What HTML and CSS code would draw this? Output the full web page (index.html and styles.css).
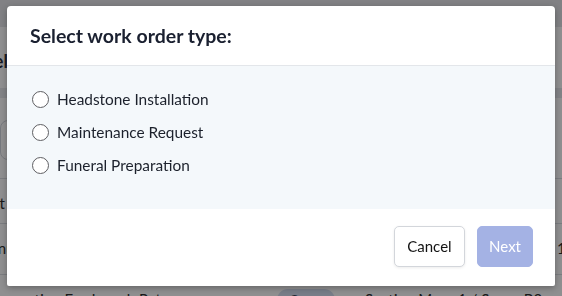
FILE: index.html
```html
<!DOCTYPE html>
<html lang="en">
<head>
  <meta charset="UTF-8" />
  <meta name="viewport" content="width=device-width, initial-scale=1" />
  <title>Work Orders</title>
  <link rel="stylesheet" href="styles.css">
</head>
<body>
  <div class="page">
    <div class="topbar"></div>
    <h2 class="page-title">Selected Work Orders</h2>
    <div class="tabs"></div>
    <div class="search"></div>
    <table class="orders">
      <tr>
        <td class="col-title">Lot Repair Request</td>
        <td class="col-status"></td>
        <td class="col-place">Section Maus 2 / Space A1</td>
        <td class="col-date"></td>
      </tr>
      <tr>
        <td class="col-title">Mnument Cleaning</td>
        <td class="col-status"><span class="pill">Open</span></td>
        <td class="col-place">Section Maus 1 / Space C4</td>
        <td class="col-date">12/04</td>
      </tr>
      <tr>
        <td class="col-title">Preparation For Joseph Peters</td>
        <td class="col-status"><span class="pill">Open</span></td>
        <td class="col-place">Section Maus 1 / Space B2</td>
        <td class="col-date"></td>
      </tr>
    </table>
  </div>

  <div class="backdrop">
    <div class="modal">
      <div class="modal-header">
        <h3>Select work order type:</h3>
      </div>
      <div class="modal-body">
        <label class="choice"><input type="radio" name="type" value="headstone"> Headstone Installation</label>
        <label class="choice"><input type="radio" name="type" value="maintenance"> Maintenance Request</label>
        <label class="choice"><input type="radio" name="type" value="funeral"> Funeral Preparation</label>
      </div>
      <div class="modal-footer">
        <button class="btn btn-cancel">Cancel</button>
        <button class="btn btn-next" disabled>Next</button>
      </div>
    </div>
  </div>
</body>
</html>
```

FILE: styles.css
```css
* { margin: 0; padding: 0; box-sizing: border-box; }
body {
  font-family: 'Lato', 'Noto Sans', sans-serif;
  background: #fff;
  color: #222;
  overflow: hidden;
}
/* Page behind the dialog */
.page {
  margin-left: -16px;
  width: 620px;
}
.topbar {
  height: 27px;
  background: #e4e5e8;
}
.page-title {
  margin-top: 22px;
  font-size: 18px;
  line-height: 24px;
  font-weight: 700;
  color: #1e2433;
}
.tabs {
  margin-top: 15px;
  height: 10px;
  background: #e6e8ec;
}
.search {
  margin: 22px 0 0 16px;
  height: 40px;
  width: 300px;
  border: 1px solid #cfd4dc;
  border-radius: 8px;
}
.orders {
  margin-top: 18px;
  border-collapse: collapse;
  font-size: 15px;
  line-height: 22px;
  color: #222;
}
.orders td {
  border-top: 1px solid #d9dce1;
  padding: 13px 0 9px;
  white-space: nowrap;
  vertical-align: top;
}
.orders tr:nth-child(n+2) td { padding-bottom: 14px; }
.col-title { width: 293px; }
.col-status { width: 88px; }
.col-place { width: 192px; }
.pill {
  display: inline-block;
  padding: 0 12px;
  border-radius: 11px;
  background: #d3ddf0;
  color: #2b3548;
  font-size: 14px;
}
/* Dialog */
.backdrop {
  position: fixed;
  top: 0; left: 0; right: 0; bottom: 0;
  background: rgba(17, 17, 20, 0.47);
  padding: 6px 7px;
}
.modal {
  width: 548px;
  background: #fff;
  border-radius: 4px 4px 2px 2px;
  box-shadow: 0 2px 6px rgba(0, 0, 0, 0.3);
  overflow: hidden;
}
.modal-header {
  padding: 18px 23px 17px;
  border-bottom: 1px solid #e3e6ea;
}
.modal-header h3 {
  font-size: 19.5px;
  line-height: 24px;
  font-weight: 700;
  color: #1a2030;
}
.modal-body {
  background: #f4f8fb;
  padding: 22px 24px 33px;
  display: flex;
  flex-direction: column;
  gap: 11px;
}
.choice {
  display: flex;
  align-items: center;
  gap: 8px;
  font-size: 15.4px;
  line-height: 22px;
  color: #1c212c;
}
.choice input {
  appearance: none;
  width: 17px;
  height: 17px;
  border: 1.3px solid #5f5f63;
  border-radius: 50%;
  background: #fff;
  margin: 0 0 0 1px;
}
.modal-footer {
  padding: 17px 22px 19px;
  display: flex;
  justify-content: flex-end;
  gap: 12px;
}
.btn {
  font-family: inherit;
  font-size: 15px;
  line-height: 21px;
  padding: 9px 12px;
  border-radius: 5px;
  cursor: pointer;
}
.btn-cancel {
  padding: 9px 12.5px;
  background: #fff;
  color: #141414;
  border: 1px solid #d3d6db;
  box-shadow: 0 1px 3px rgba(0, 0, 0, 0.08);
}
.btn-next {
  padding: 9px 11px;
  background: #a4b2e4;
  color: #fff;
  border: 1px solid #a4b2e4;
  cursor: default;
}
```
